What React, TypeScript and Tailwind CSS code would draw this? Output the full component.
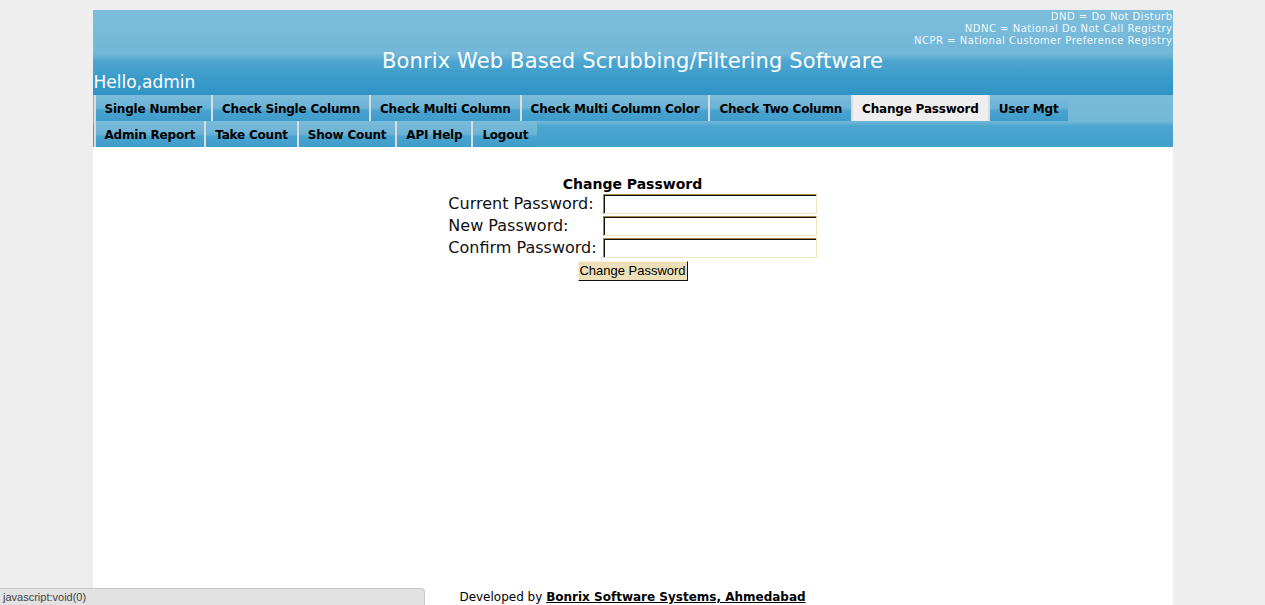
import React from "react";

const row1 = [
  "Single Number",
  "Check Single Column",
  "Check Multi Column",
  "Check Multi Column Color",
  "Check Two Column",
  "Change Password",
  "User Mgt",
];
const row2 = ["Admin Report", "Take Count", "Show Count", "API Help", "Logout"];

const font = { fontFamily: '"DejaVu Sans", Verdana, sans-serif' };

function Tab({ label }: { label: string }) {
  const active = label === "Change Password";
  return (
    <a
      href="#"
      className={
        "flex h-[26px] items-center border-l-2 border-[#dcdcdc] pt-[2px] px-[9px] text-[12px] font-bold tracking-[-0.2px] text-black " +
        (active
          ? "bg-[#eeeeee] text-[#222]"
          : "bg-[linear-gradient(180deg,#7bbcdb_0%,#6bb3d6_50%,#4aa3cf_60%,#3f9cca_100%)]")
      }
    >
      {label}
    </a>
  );
}

export default function App() {
  return (
    <div className="relative min-h-[605px] bg-[#eeeeee] pt-[10px]" style={font}>
      <div className="mx-auto flex h-[595px] w-[1080px] flex-col bg-white">
        {/* header */}
        <div className="flex h-[85px] flex-col bg-[linear-gradient(180deg,#7cbddb_0%,#72b7d8_52%,#4ea6d0_60%,#3a9bca_80%,#2f94c5_100%)] text-white">
          <div className="flex flex-col items-end pt-[1px] text-[10px] leading-[12px] tracking-[0.5px] text-[#f2f8fc]">
            <span>DND = Do Not Disturb</span>
            <span>NDNC = National Do Not Call Registry</span>
            <span>NCPR = National Customer Preference Registry</span>
          </div>
          <div className="mt-[2px] text-center text-[21px] leading-[24px] tracking-[0.15px]">
            Bonrix Web Based Scrubbing/Filtering Software
          </div>
          <div className="mt-[-2px] pl-[1px] text-[17px] leading-[22px]">Hello,admin</div>
        </div>
        {/* nav */}
        <div className="flex flex-col bg-[linear-gradient(180deg,#79bbda_0%,#74b8d8_50%,#4ba5cf_60%,#43a0cd_100%)] pl-[1px]">
          <div className="flex">
            {row1.map((t) => (
              <Tab key={t} label={t} />
            ))}
          </div>
          <div className="flex">
            {row2.map((t) => (
              <Tab key={t} label={t} />
            ))}
          </div>
        </div>
        {/* content */}
        <div className="flex flex-1 flex-col items-center pt-[29px]">
          <div className="text-[14px] font-bold leading-[17px]">Change Password</div>
          <table className="mt-[-1px] border-separate border-spacing-[2px] text-[16px] text-[#111]">
            <tbody>
              {["Current Password:", "New Password:", "Confirm Password:"].map((l) => (
                <tr key={l}>
                  <td className="h-[20px] p-0 pr-[4px] text-left leading-[18px]">{l}</td>
                  <td className="p-0">
                    <input
                      type="password"
                      className="block h-[20px] w-[214px] border border-t-[#a8893f] border-l-[#a8893f] border-b-[#f3e4bd] border-r-[#f3e4bd] bg-white shadow-[inset_1px_1px_0_#111] outline-none"
                    />
                  </td>
                </tr>
              ))}
            </tbody>
          </table>
          <button
            className="mt-[1px] h-[20px] w-[110px] border border-t-[#fbf2d8] border-l-[#fbf2d8] border-b-[#111] border-r-[#111] bg-[#ede0b8] text-[13px] leading-[16px] text-black"
            style={{ fontFamily: '"Liberation Sans", Arial, sans-serif' }}
          >
            Change Password
          </button>
          <div className="mt-auto text-[12px] leading-[16px] text-black">
            Developed by{" "}
            <a href="#" className="font-bold text-black underline">
              Bonrix Software Systems, Ahmedabad
            </a>
          </div>
        </div>
      </div>
      <div
        className="absolute bottom-0 left-0 flex h-[17px] w-[425px] items-center rounded-tr-[4px] border-t border-r border-[#c8c8c8] bg-[#e2e2e2] pl-[3px] text-[11px] text-[#444]"
        style={{ fontFamily: '"Liberation Sans", Arial, sans-serif' }}
      >
        javascript:void(0)
      </div>
    </div>
  );
}
